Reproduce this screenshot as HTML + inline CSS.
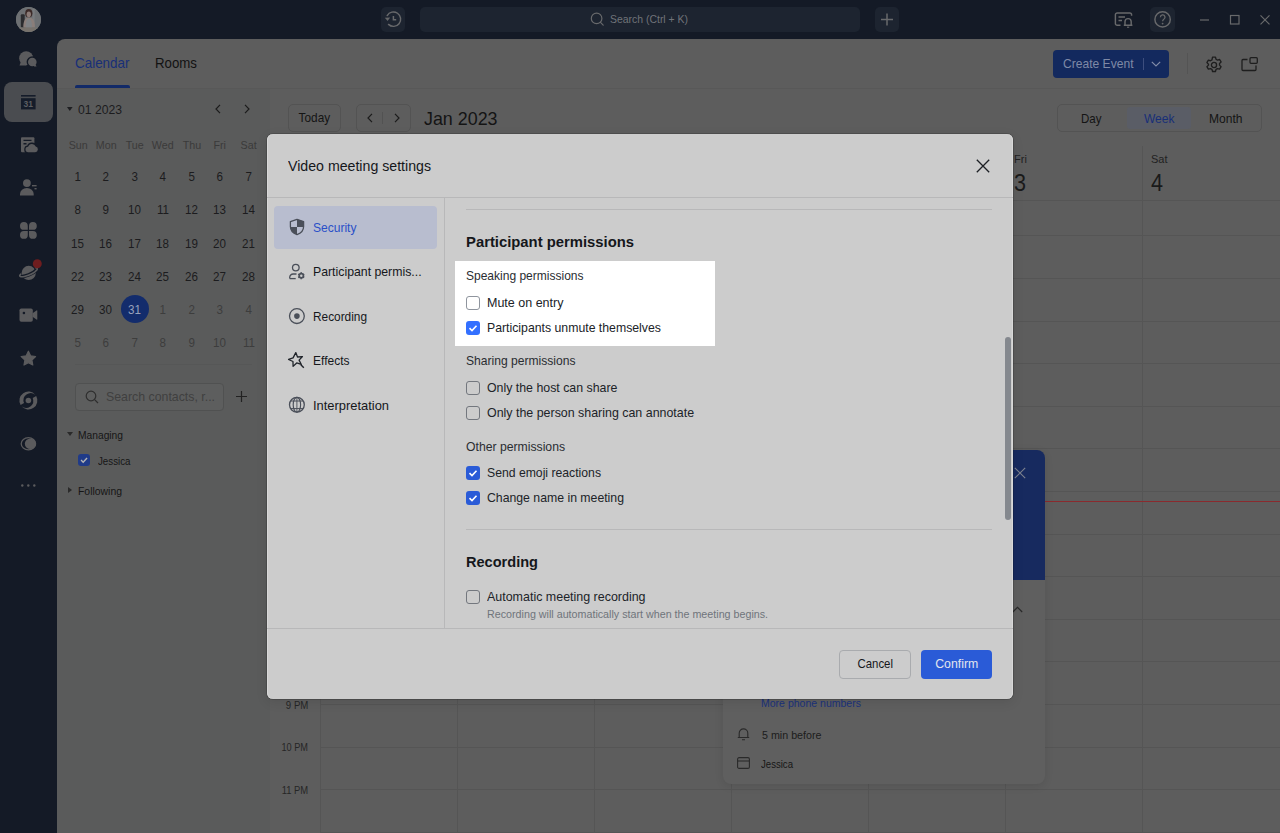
<!DOCTYPE html>
<html lang="en">
<head>
<meta charset="utf-8">
<title>Calendar - Video meeting settings</title>
<style>
*{box-sizing:border-box;margin:0;padding:0}
html,body{width:1280px;height:833px;overflow:hidden}
body{background:#141a26;font-family:"Liberation Sans",sans-serif;font-size:13px;color:#1a1a1a;position:relative}
.abs{position:absolute}
svg{display:block;overflow:visible}
.t{position:absolute;white-space:nowrap;line-height:1}
/* top bar */
#topbar{position:absolute;left:0;top:0;width:1280px;height:39px;background:#141a26}
#nav{position:absolute;left:0;top:39px;width:57px;height:794px;background:#141a26}
.tb-btn{position:absolute;background:#1d2430;border-radius:5px}
/* main */
#main{position:absolute;left:57px;top:39px;width:1223px;height:794px;background:#5d5d5d;border-top-left-radius:8px;overflow:hidden}
#side{position:absolute;left:0;top:50px;width:213px;height:744px;background:#5a5b5b}
#hdrline{position:absolute;left:0;top:49px;width:1223px;height:1px;background:#585858}

/* header tabs */
.tab{position:absolute;top:14px;font-size:14.5px;line-height:20px;white-space:nowrap}
/* mini calendar */
.wd{position:absolute;top:99px;width:28px;text-align:center;font-size:11.500px;line-height:14px;color:#3a3a3a}
.d{position:absolute;width:28px;height:28px;line-height:29px;text-align:center;font-size:13.500px;color:#1c1c1e;border-radius:50%}
.d i{font-style:normal;display:inline-block;transform:scaleX(.86)}
.wd i{font-style:normal;display:inline-block;transform:scaleX(.93)}
.d.o{color:#3d3d3d}
.d.sel{background:#132c6c;color:#98a1bb}
.grp{position:absolute;font-size:11.5px;line-height:14px;color:#161616;white-space:nowrap}
.cb{position:absolute;width:14px;height:14px;border-radius:3px}
.cb.on{background:#2856d6}
.cb.off{border:1px solid #6f737a;background:#ccc}
.cb svg{position:absolute;left:0;top:0}

/* toolbar */
.btn{position:absolute;border:1px solid #535353;border-radius:5px;font-size:13px;line-height:26px;text-align:center;color:#141414;white-space:nowrap}
.vline{position:absolute;width:1px;background:#555}
.hline{position:absolute;height:1px;background:#555}
.tm{position:absolute;width:40px;text-align:right;font-size:10px;line-height:12px;color:#262626;white-space:nowrap}
.dh{position:absolute;font-size:11px;line-height:14px;color:#222}
.dn{position:absolute;font-size:23.500px;line-height:26px;color:#1a1a1a;transform:scaleX(.92);transform-origin:0 50%}

/* popover */
#pop{position:absolute;left:723px;top:450px;width:322px;height:334px;border-radius:8px;background:#5f5f5f;box-shadow:0 2px 8px rgba(0,0,0,.10);overflow:hidden}
#pop .hd{position:absolute;left:0;top:0;width:322px;height:130px;background:#172a5f}
/* modal */
#modal{position:absolute;left:267px;top:134px;width:746px;height:565px;border-radius:6px;background:#ccc;box-shadow:inset 1px 0 0 #d8d8d8,inset -1px 0 0 #d8d8d8,0 3px 12px rgba(0,0,0,.10),0 0 0 1px rgba(0,0,0,.14);overflow:hidden;color:#171a1f}
#modal .ttl{position:absolute;left:21px;top:23px;font-size:15px;line-height:18px;color:#15171b;white-space:nowrap}
.mi{position:absolute;left:46px;font-size:13px;line-height:16px;color:#15171b;white-space:nowrap}
.h2{position:absolute;left:199px;font-size:15px;line-height:18px;font-weight:bold;color:#15171b;white-space:nowrap}
.h3{position:absolute;left:199px;font-size:13px;line-height:16px;color:#2a2d32;white-space:nowrap}
.lb{position:absolute;left:220px;font-size:13px;line-height:16px;color:#202328;white-space:nowrap}
.sub{position:absolute;left:220px;font-size:11px;line-height:14px;color:#6f747b;white-space:nowrap}
.mh{position:absolute;height:1px;background:#b8b8b9}
.mbtn{position:absolute;top:516px;height:28.500px;border-radius:4px;font-size:13px;line-height:26px;text-align:center}
.sx{display:inline-block;white-space:nowrap}
</style>
</head>
<body>
<div id="topbar">
  <div class="abs" id="avatar" style="left:16px;top:6.700px;width:25.400px;height:25.400px;border-radius:50%;background:#6c6f72;overflow:hidden">
    <svg width="25.400" height="25.400" viewBox="0 0 25.400 25.400"><rect width="25.400" height="25.400" fill="#6d7073"/><rect x="16.500" y="2" width="2.200" height="14" fill="#787b7e"/><rect x="4.800" y="7.200" width="3.900" height="13.200" rx="1" fill="#2b2c2f"/><ellipse cx="12.800" cy="6.300" rx="3.600" ry="4.300" fill="#3b2a28"/><ellipse cx="12.800" cy="7.300" rx="2.200" ry="2.900" fill="#8b7b77"/><path d="M7.300 20.500c0-6 1.500-10 5.500-10s6.200 3 6.200 10z" fill="#8a7e7a"/><path d="M9.800 20.500c0-5 .8-9 3-9s3.200 4 3.200 9z" fill="#7f8285"/><rect x="0" y="20.500" width="25.400" height="5" fill="#77726c"/></svg>
  </div>
  <div class="tb-btn" style="left:381px;top:7px;width:24px;height:25px"></div>
  <div class="tb-btn" style="left:420px;top:7px;width:440px;height:25px"></div>
  <div class="tb-btn" style="left:875px;top:7px;width:24px;height:25px"></div>
  <div class="tb-btn" style="left:1150px;top:7px;width:25px;height:25px"></div>
  <svg class="abs" style="left:0;top:0" width="1280" height="39" viewBox="0 0 1280 39" fill="none" stroke="#68696b" stroke-width="1.450">
    <!-- history -->
    <path d="M387.200 15.600a7.200 7.200 0 1 1 1.300 8.800" stroke-linecap="round"/><path d="M384.800 17.800l2.800 3.200 2.600-3.600z" fill="#666769" stroke="none"/><path d="M393.400 16v3.700h2.800" stroke-width="1.500"/>
    <!-- search -->
    <circle cx="596.600" cy="18.400" r="5.300" stroke-width="1.200"/><path d="M600.500 22.400l2.700 2.700" stroke-width="1.200" stroke-linecap="round"/>
    <!-- plus -->
    <path d="M887 13.500v12M881 19.500h12" stroke-width="1.500"/>
    <!-- notify card -->
    <path d="M1120.500 25.300h-3.300a1.800 1.800 0 0 1-1.800-1.800v-8.800a1.800 1.800 0 0 1 1.800-1.800h12.600a1.800 1.800 0 0 1 1.800 1.800v1"/><path d="M1118.500 17h6.500M1118.500 20.500h3.500"/><path d="M1123.800 25.200h8.600M1125 25v-3.300a3.100 3.100 0 0 1 6.200 0v3.300" fill="#141a26"/><path d="M1127 27.200h2.200" stroke-width="1.100"/>
    <!-- help -->
    <circle cx="1162.600" cy="19.400" r="7.700"/><path d="M1160.400 17.200a2.300 2.300 0 1 1 3.400 2c-.8 .5-1.200 1-1.200 2.100" stroke-width="1.300"/><circle cx="1162.600" cy="23.600" r=".9" fill="#666769" stroke="none"/>
    <!-- window controls -->
    <path d="M1200 20h9" stroke-width="1.200"/><rect x="1230.500" y="15.500" width="8.500" height="8.500" stroke-width="1.200"/><path d="M1260.500 15.300l9 9M1269.500 15.300l-9 9" stroke-width="1.200"/>
  </svg>
  <div class="t" style="left:610px;top:14px;font-size:11px;color:#707379"><span class="sx" style="transform:scaleX(0.949);transform-origin:0 50%">Search (Ctrl + K)</span></div>
</div>
<div id="nav">
  <div class="abs" style="left:4px;top:43px;width:49px;height:40px;border-radius:8px;background:#4a4c50"></div>
  <svg class="abs" style="left:0;top:0" width="57" height="520" viewBox="0 39 57 520">
    <!-- chat -->
    <g fill="#5b5b5d"><circle cx="26.200" cy="58.300" r="7"/><path d="M20.800 62l-1.300 3.600h7z"/><circle cx="32.300" cy="62" r="5.700" fill="#141a26"/><circle cx="32.300" cy="62" r="4.300"/><path d="M34 65v1.600h2.600l-1.400-2.600z"/></g>
    <!-- calendar -->
    <g fill="#151c2a"><rect x="21" y="95" width="14.600" height="1.600"/><rect x="21" y="98.200" width="14.600" height="11.200"/></g>
    <text x="28.300" y="106.800" font-family="Liberation Sans, sans-serif" font-size="8.500" font-weight="bold" fill="#5c5e62" text-anchor="middle">31</text>
    <!-- docs with cloud -->
    <g fill="#5b5b5d"><rect x="21" y="137.300" width="13.400" height="15" rx="1"/><path d="M23.500 140.400h8M23.500 143.700h3" stroke="#141a26" stroke-width="1.400"/>
      <path d="M28.300 152.200a2.700 2.700 0 0 1-.2-5.400 4 4 0 0 1 7.600-.3 2.900 2.900 0 0 1-.5 5.700z" stroke="#141a26" stroke-width="2.600"/>
      <path d="M28.300 152.200a2.700 2.700 0 0 1-.2-5.400 4 4 0 0 1 7.600-.3 2.900 2.900 0 0 1-.5 5.700z"/></g>
    <!-- contacts -->
    <g fill="#5b5b5d"><circle cx="26.900" cy="183.100" r="3.900"/><path d="M20 195.600v-1.600a6.800 6 0 0 1 13.700 0v1.600z"/><rect x="32" y="185" width="4.600" height="1.400"/><rect x="34.500" y="188" width="2.100" height="1.400"/></g>
    <!-- apps -->
    <g fill="#5b5b5d"><path d="M27.800 229.800h-3.900a3.900 3.900 0 1 1 3.900-3.900z"/><path d="M29 229.800h3.900a3.900 3.900 0 1 0-3.900-3.900z"/><path d="M27.800 231h-3.900a3.900 3.900 0 1 0 3.900 3.900z"/><path d="M29 231h3.900a3.900 3.900 0 1 1-3.900 3.900z"/></g>
    <!-- planet -->
    <g><circle cx="28.700" cy="272.900" r="7.100" fill="#5b5b5d"/><path d="M20.500 276.300c4 1 12.500-2.500 16-6.300" fill="none" stroke="#141a26" stroke-width="3.600"/><path d="M20.800 274.200c-2.500 2-.5 3.200 3.500 2.300 5-1.200 10.500-4 12.500-6.500 1.200-1.600.2-2.300-1.200-2.200" fill="none" stroke="#5b5b5d" stroke-width="1.600" stroke-linecap="round"/><circle cx="37.300" cy="263.700" r="4.500" fill="#6e1d1f"/></g>
    <!-- video -->
    <g fill="#5b5b5d"><rect x="19.500" y="308.400" width="13.300" height="13.300" rx="1.800"/><path d="M32.500 313.300l4-2.900a.5 .5 0 0 1 .8 .4v8.400a.5 .5 0 0 1-.8 .4l-4-2.900z"/><circle cx="23.900" cy="313" r="1.300" fill="#141a26"/></g>
    <!-- star -->
    <path fill="#5b5b5d" d="M28.400 351.200l2.200 4.600 5 .7-3.700 3.500 .9 5-4.400-2.400-4.400 2.400 .9-5-3.700-3.500 5-.7z" stroke="#5b5b5d" stroke-width="1.200" stroke-linejoin="round"/>
    <!-- swirl -->
    <g fill="#5b5b5d"><circle cx="28.400" cy="400.500" r="2.800"/><path d="M20.610 405A9 9 0 0 1 35.290 394.710A7.200 7.200 0 0 0 24.070 403Z"/><path d="M20.610 405A9 9 0 0 1 35.290 394.710A7.200 7.200 0 0 0 24.070 403Z" transform="rotate(180 28.400 400.500)"/></g>
    <!-- moon -->
    <g><ellipse cx="28.400" cy="443.700" rx="7.200" ry="6.100" fill="none" stroke="#5b5b5d" stroke-width="1.300"/><ellipse cx="30.400" cy="443.700" rx="5.600" ry="5.300" fill="#5b5b5d"/></g>
    <!-- dots -->
    <g fill="#5b5b5d"><circle cx="22.300" cy="485.500" r="1.200"/><circle cx="28.300" cy="485.500" r="1.200"/><circle cx="34.300" cy="485.500" r="1.200"/></g>
  </svg>
</div>
<div id="main">
  <div id="side"></div>
  <div id="hdrline"></div>

  <div class="tab" style="left:18px;color:#182f78"><span class="sx" style="transform:scaleX(0.926);transform-origin:0 50%">Calendar</span></div>
  <div class="abs" style="left:18px;top:46px;width:55px;height:3px;background:#122a68;border-radius:2px 2px 0 0"></div>
  <div class="tab" style="left:98px;color:#121212"><span class="sx" style="transform:scaleX(0.914);transform-origin:0 50%">Rooms</span></div>
  <svg class="abs" style="left:9.600px;top:68.200px" width="5.600" height="4" viewBox="0 0 7 5"><path d="M0 0h7L3.500 5z" fill="#1e1f22"/></svg>
  <div class="t" style="left:21px;top:63.500px;font-size:13px;color:#1c1c1e"><span class="sx" style="transform:scaleX(0.936);transform-origin:0 50%">01 2023</span></div>
  <svg class="abs" style="left:158px;top:65px" width="6" height="10" viewBox="0 0 6 10"><path d="M5 .8L1 5l4 4.200" fill="none" stroke="#1c1c1c" stroke-width="1.200"/></svg>
  <svg class="abs" style="left:187px;top:65px" width="6" height="10" viewBox="0 0 6 10"><path d="M1 .8L5 5 1 9.200" fill="none" stroke="#1c1c1c" stroke-width="1.200"/></svg>
  <div class="wd" style="left:7px"><i>Sun</i></div>
  <div class="wd" style="left:35px"><i>Mon</i></div>
  <div class="wd" style="left:64px"><i>Tue</i></div>
  <div class="wd" style="left:92px"><i>Wed</i></div>
  <div class="wd" style="left:121px"><i>Thu</i></div>
  <div class="wd" style="left:149px"><i>Fri</i></div>
  <div class="wd" style="left:178px"><i>Sat</i></div>
  <div class="d" style="left:7px;top:123px"><i>1</i></div>
  <div class="d" style="left:35px;top:123px"><i>2</i></div>
  <div class="d" style="left:64px;top:123px"><i>3</i></div>
  <div class="d" style="left:92px;top:123px"><i>4</i></div>
  <div class="d" style="left:121px;top:123px"><i>5</i></div>
  <div class="d" style="left:149px;top:123px"><i>6</i></div>
  <div class="d" style="left:178px;top:123px"><i>7</i></div>
  <div class="d" style="left:7px;top:156px"><i>8</i></div>
  <div class="d" style="left:35px;top:156px"><i>9</i></div>
  <div class="d" style="left:64px;top:156px"><i>10</i></div>
  <div class="d" style="left:92px;top:156px"><i>11</i></div>
  <div class="d" style="left:121px;top:156px"><i>12</i></div>
  <div class="d" style="left:149px;top:156px"><i>13</i></div>
  <div class="d" style="left:178px;top:156px"><i>14</i></div>
  <div class="d" style="left:7px;top:190px"><i>15</i></div>
  <div class="d" style="left:35px;top:190px"><i>16</i></div>
  <div class="d" style="left:64px;top:190px"><i>17</i></div>
  <div class="d" style="left:92px;top:190px"><i>18</i></div>
  <div class="d" style="left:121px;top:190px"><i>19</i></div>
  <div class="d" style="left:149px;top:190px"><i>20</i></div>
  <div class="d" style="left:178px;top:190px"><i>21</i></div>
  <div class="d" style="left:7px;top:223px"><i>22</i></div>
  <div class="d" style="left:35px;top:223px"><i>23</i></div>
  <div class="d" style="left:64px;top:223px"><i>24</i></div>
  <div class="d" style="left:92px;top:223px"><i>25</i></div>
  <div class="d" style="left:121px;top:223px"><i>26</i></div>
  <div class="d" style="left:149px;top:223px"><i>27</i></div>
  <div class="d" style="left:178px;top:223px"><i>28</i></div>
  <div class="d" style="left:7px;top:256px"><i>29</i></div>
  <div class="d" style="left:35px;top:256px"><i>30</i></div>
  <div class="d sel" style="left:64px;top:256px"><i>31</i></div>
  <div class="d o" style="left:92px;top:256px"><i>1</i></div>
  <div class="d o" style="left:121px;top:256px"><i>2</i></div>
  <div class="d o" style="left:149px;top:256px"><i>3</i></div>
  <div class="d o" style="left:178px;top:256px"><i>4</i></div>
  <div class="d o" style="left:7px;top:289px"><i>5</i></div>
  <div class="d o" style="left:35px;top:289px"><i>6</i></div>
  <div class="d o" style="left:64px;top:289px"><i>7</i></div>
  <div class="d o" style="left:92px;top:289px"><i>8</i></div>
  <div class="d o" style="left:121px;top:289px"><i>9</i></div>
  <div class="d o" style="left:149px;top:289px"><i>10</i></div>
  <div class="d o" style="left:178px;top:289px"><i>11</i></div>
  <div class="abs" style="left:18px;top:325px;width:177px;height:1px;background:#565757"></div>
  <div class="abs" style="left:18px;top:344px;width:149px;height:28px;border:1px solid #505151;border-radius:4px;background:#5d5e5e"></div>
  <svg class="abs" style="left:28px;top:351px" width="14" height="14" viewBox="0 0 14 14"><circle cx="6" cy="6" r="4.800" fill="none" stroke="#2e2e2e" stroke-width="1.200"/><path d="M9.600 9.600L13 13" stroke="#2e2e2e" stroke-width="1.200"/></svg>
  <div class="t" style="left:49px;top:351px;font-size:13px;color:#404040"><span class="sx" style="transform:scaleX(0.949);transform-origin:0 50%">Search contacts, r...</span></div>
  <svg class="abs" style="left:179px;top:352px" width="11" height="11" viewBox="0 0 11 11"><path d="M5.500 0v11M0 5.500h11" stroke="#222" stroke-width="1.200"/></svg>
  <svg class="abs" style="left:10px;top:393px" width="6" height="4" viewBox="0 0 6 4"><path d="M0 0h6L3 4z" fill="#2a2a2a"/></svg>
  <div class="grp" style="left:21px;top:388.500px"><span class="sx" style="transform:scaleX(0.891);transform-origin:0 50%">Managing</span></div>
  <div class="cb on" style="left:21.400px;top:415px;width:12px;height:12px;background:#203b88"><svg width="12" height="12" viewBox="0 0 13 13"><path d="M3.300 6.600l2.300 2.300 4.200-4.600" fill="none" stroke="#b5b5b5" stroke-width="1.500"/></svg></div>
  <div class="grp" style="left:41px;top:414.500px"><span class="sx" style="transform:scaleX(0.847);transform-origin:0 50%">Jessica</span></div>
  <svg class="abs" style="left:11px;top:448px" width="4" height="6" viewBox="0 0 4 6"><path d="M0 0v6L4 3z" fill="#2a2a2a"/></svg>
  <div class="grp" style="left:21px;top:444.500px"><span class="sx" style="transform:scaleX(0.906);transform-origin:0 50%">Following</span></div>
  <!--MAINGRID-->
  <div class="abs" style="left:995.5px;top:11px;width:116px;height:28px;background:#13295e;border-radius:4px"></div>
  <div class="t" style="left:1006px;top:18px;font-size:13px;color:#7f89a6"><span class="sx" style="transform:scaleX(0.929);transform-origin:0 50%">Create Event</span></div>
  <div class="abs" style="left:1086px;top:19px;width:1px;height:12px;background:#3d4e7e"></div>
  <svg class="abs" style="left:1094px;top:22px" width="10" height="6" viewBox="0 0 10 6"><path d="M.8 .8L5 5 9.200 .8" fill="none" stroke="#7f89a6" stroke-width="1.200"/></svg>
  <div class="abs" style="left:1130px;top:14px;width:1px;height:21px;background:#545454"></div>
  <svg class="abs" style="left:1148px;top:16.6px" width="18" height="18" viewBox="0 0 16 16"><path d="M6.700 1h2.600l.5 1.900 1.300.7 1.900-.5 1.300 2.200-1.400 1.400v1.400l1.400 1.400-1.300 2.200-1.900-.5-1.300.7-.5 1.900H6.700l-.5-1.900-1.300-.7-1.900.5-1.300-2.200 1.400-1.400V7.300L1.700 5.900 3 3.700l1.900.5 1.300-.7z" fill="none" stroke="#1e1e1e" stroke-width="1.200" stroke-linejoin="round"/><circle cx="8" cy="8" r="2.300" fill="none" stroke="#1e1e1e" stroke-width="1.200"/></svg>
  <svg class="abs" style="left:1184px;top:18px" width="17" height="14" viewBox="0 0 17 14"><path d="M6.500 2.500H2a1 1 0 0 0-1 1v9a1 1 0 0 0 1 1h12a1 1 0 0 0 1-1V8.500" fill="none" stroke="#1e1e1e" stroke-width="1.300"/><rect x="9" y=".7" width="7.300" height="5.600" rx="1" fill="none" stroke="#1e1e1e" stroke-width="1.300"/></svg>
  <div class="btn" style="left:231px;top:65px;width:53px;height:28px"><span class="sx" style="transform:scaleX(0.908);transform-origin:50% 50%">Today</span></div>
  <div class="btn" style="left:298.5px;top:65px;width:55px;height:28px"></div>
  <div class="abs" style="left:325px;top:73px;width:1px;height:12px;background:#525252"></div>
  <svg class="abs" style="left:310px;top:74px" width="6" height="10" viewBox="0 0 6 10"><path d="M5 .8L1 5l4 4.200" fill="none" stroke="#1c1c1c" stroke-width="1.200"/></svg>
  <svg class="abs" style="left:337px;top:74px" width="6" height="10" viewBox="0 0 6 10"><path d="M1 .8L5 5 1 9.200" fill="none" stroke="#1c1c1c" stroke-width="1.200"/></svg>
  <div class="t" style="left:367px;top:70.5px;font-size:18.5px;color:#141414"><span class="sx" style="transform:scaleX(0.966);transform-origin:0 50%">Jan 2023</span></div>
  <div class="btn" style="left:999.5px;top:65px;width:205.500px;height:28px"></div>
  <div class="abs" style="left:1070px;top:68px;width:64px;height:22px;background:#5a5d66;border-radius:3px"></div>
  <div class="t" style="left:1024px;top:72.500px;font-size:13px;color:#141414"><span class="sx" style="transform:scaleX(0.886);transform-origin:0 50%">Day</span></div>
  <div class="t" style="left:1087px;top:72.500px;font-size:13px;color:#182f78"><span class="sx" style="transform:scaleX(0.924);transform-origin:0 50%">Week</span></div>
  <div class="t" style="left:1152px;top:72.500px;font-size:13px;color:#141414"><span class="sx" style="transform:scaleX(0.927);transform-origin:0 50%">Month</span></div>
  <div class="vline" style="left:263px;top:107px;height:700px"></div>
  <div class="vline" style="left:400px;top:107px;height:700px"></div>
  <div class="vline" style="left:537px;top:107px;height:700px"></div>
  <div class="vline" style="left:674px;top:107px;height:700px"></div>
  <div class="vline" style="left:811px;top:107px;height:700px"></div>
  <div class="vline" style="left:948px;top:107px;height:700px"></div>
  <div class="vline" style="left:1085px;top:107px;height:700px"></div>
  <div class="hline" style="left:213px;top:161px;width:1010px"></div>
  <div class="hline" style="left:263px;top:196px;width:960px"></div>
  <div class="hline" style="left:263px;top:239px;width:960px"></div>
  <div class="hline" style="left:263px;top:282px;width:960px"></div>
  <div class="hline" style="left:263px;top:324px;width:960px"></div>
  <div class="hline" style="left:263px;top:367px;width:960px"></div>
  <div class="hline" style="left:263px;top:409px;width:960px"></div>
  <div class="hline" style="left:263px;top:452px;width:960px"></div>
  <div class="hline" style="left:263px;top:495px;width:960px"></div>
  <div class="hline" style="left:263px;top:537px;width:960px"></div>
  <div class="hline" style="left:263px;top:580px;width:960px"></div>
  <div class="hline" style="left:263px;top:622px;width:960px"></div>
  <div class="hline" style="left:263px;top:665px;width:960px"></div>
  <div class="hline" style="left:263px;top:708px;width:960px"></div>
  <div class="hline" style="left:263px;top:750px;width:960px"></div>
  <div class="hline" style="left:263px;top:793px;width:960px"></div>
  <div class="tm" style="left:211.300px;top:661.3px"><span class="sx" style="transform:scaleX(0.964);transform-origin:100% 50%">9 PM</span></div>
  <div class="tm" style="left:211.300px;top:703.3px"><span class="sx" style="transform:scaleX(0.917);transform-origin:100% 50%">10 PM</span></div>
  <div class="tm" style="left:211.300px;top:746.3px"><span class="sx" style="transform:scaleX(0.941);transform-origin:100% 50%">11 PM</span></div>
  <div class="dh" style="left:957px;top:113px">Fri</div>
  <div class="dn" style="left:957px;top:131px">3</div>
  <div class="dh" style="left:1094px;top:113px">Sat</div>
  <div class="dn" style="left:1094px;top:131px">4</div>
  <div class="abs" style="left:811px;top:462px;width:412px;height:1px;background:#8a2a2e"></div>
</div>

<div id="pop">
  <div class="hd"></div>
  <svg class="abs" style="left:291px;top:16.700px" width="12" height="12" viewBox="0 0 12 12"><path d="M.8 .8l10.400 10.400M11.200 .8L.8 11.200" stroke="#7d828f" stroke-width="1.100"/></svg>
  <svg class="abs" style="left:288.500px;top:156.300px" width="11" height="7" viewBox="0 0 11 7"><path d="M.8 6L5.500 1.300 10.200 6" fill="none" stroke="#2a2a2a" stroke-width="1.200"/></svg>
  <div class="t" style="left:38px;top:248px;font-size:11px;color:#1b327c"><span class="sx" style="transform:scaleX(0.956);transform-origin:0 50%">More phone numbers</span></div>
  <svg class="abs" style="left:14px;top:277px" width="13" height="14" viewBox="0 0 13 14"><path d="M2.200 10.500V6.200a4.300 4.300 0 0 1 8.600 0v4.300M.8 10.500h11.400M5 12.800h3" fill="none" stroke="#2a2a2a" stroke-width="1.100"/></svg>
  <div class="t" style="left:39px;top:280px;font-size:11px;color:#1c1c1c"><span class="sx" style="transform:scaleX(0.973);transform-origin:0 50%">5 min before</span></div>
  <svg class="abs" style="left:14px;top:307px" width="13" height="12" viewBox="0 0 13 12"><rect x=".6" y=".6" width="11.800" height="10.800" rx="1.500" fill="none" stroke="#2a2a2a" stroke-width="1.100"/><path d="M.6 4h11.800" stroke="#2a2a2a" stroke-width="1.100"/></svg>
  <div class="t" style="left:38px;top:309px;font-size:10.5px;color:#161616"><span class="sx" style="transform:scaleX(0.914);transform-origin:0 50%">Jessica</span></div>
</div>
<div id="modal">
  <div class="ttl"><span class="sx" style="transform:scaleX(0.944);transform-origin:0 50%">Video meeting settings</span></div>
  <svg class="abs" style="left:709px;top:25px" width="14" height="14" viewBox="0 0 14 14"><path d="M.8 .8l12.400 12.400M13.200 .8L.8 13.200" stroke="#1c1f24" stroke-width="1.300"/></svg>
  <div class="mh" style="left:0;top:63px;width:746px"></div>
  <div class="abs" style="left:176.500px;top:64px;width:1px;height:430px;background:#b8b8b9"></div>
  <div class="mh" style="left:0;top:494px;width:746px"></div>
  <div class="abs" style="left:7px;top:72px;width:162.500px;height:42.600px;border-radius:4px;background:#b8bdcf"></div>
  <svg class="abs" style="left:0;top:0" width="60" height="300" viewBox="267 134 60 300" fill="none" stroke="#4a4f59" stroke-width="1.300">
    <!-- shield -->
    <path d="M297 219.300l6.600 2.300v4.800c0 4-2.700 6.800-6.600 8.200-3.900-1.400-6.600-4.200-6.600-8.200v-4.800z" stroke-linejoin="round"/>
    <path d="M297 219.300l6.600 2.300v5.300H297z" fill="#4a4f59" stroke="none"/><path d="M297 226.900v7.700c-3.600-1.300-6.200-3.800-6.600-7.700z" fill="#4a4f59" stroke="none"/>
    <!-- person gear -->
    <circle cx="295.800" cy="267.600" r="3.300"/><path d="M289.700 278.600v-1.200a3.400 3.400 0 0 1 3.400-3.400h3.400"/><path d="M289.700 278.600h6" />
    <circle cx="301.300" cy="275.800" r="2.100" stroke-width="1.700"/><path d="M301.200 272.300v1M301.200 278.300v1M298.200 274.100l.9 .5M303.300 277l.9 .5M298.200 277.500l.9-.5M303.300 274.600l.9-.5" stroke-width="1.600"/>
    <!-- recording -->
    <circle cx="296.900" cy="316.100" r="7.400"/><circle cx="296.900" cy="316.100" r="2.800" fill="#4a4f59" stroke="none"/>
    <!-- effects -->
    <path transform="translate(295.800 359.600) scale(1.130) translate(-295.800 -359.600)" d="M295.800 353.400l1.500 3.900 4.400-.4-3 3.200 2 3.800-4.100-1.300-3.200 3-.1-4.300-3.900-1.800 4-1.400z" stroke="#1f2329" stroke-width="1.150" stroke-linejoin="round"/><path d="M300.800 364.800l3 3" stroke="#1f2329" stroke-width="1.400"/>
    <!-- globe -->
    <circle cx="296.900" cy="404.800" r="7.400"/><ellipse cx="296.900" cy="404.800" rx="3.700" ry="7.400" stroke-width="1.150"/><path d="M296.900 397.400v14.800" stroke-width=".9"/><path d="M290.600 401h12.600M290.600 408.600h12.600" stroke-width="1"/>
  </svg>
  <div class="mi" style="top:86px;color:#2a50c8"><span class="sx" style="transform:scaleX(0.926);transform-origin:0 50%">Security</span></div>
  <div class="mi" style="top:130px;color:#15171b"><span class="sx" style="transform:scaleX(0.945);transform-origin:0 50%">Participant permis...</span></div>
  <div class="mi" style="top:175px;color:#15171b"><span class="sx" style="transform:scaleX(0.911);transform-origin:0 50%">Recording</span></div>
  <div class="mi" style="top:219px;color:#15171b"><span class="sx" style="transform:scaleX(0.924);transform-origin:0 50%">Effects</span></div>
  <div class="mi" style="top:264px;color:#15171b"><span class="sx" style="transform:scaleX(0.992);transform-origin:0 50%">Interpretation</span></div>
  <div class="mh" style="left:199px;top:75px;width:526px"></div>
  <div class="h2" style="top:99px"><span class="sx" style="transform:scaleX(0.988);transform-origin:0 50%">Participant permissions</span></div>
  <div class="abs" style="left:188px;top:127px;width:260px;height:84.500px;background:#fff"></div>
  <div class="h3" style="top:134px"><span class="sx" style="transform:scaleX(0.924);transform-origin:0 50%">Speaking permissions</span></div>
  <div class="cb off" style="left:199px;top:161.500px;background:#fff;border-color:#8f959e"></div>
  <div class="lb" style="top:161px"><span class="sx" style="transform:scaleX(0.962);transform-origin:0 50%">Mute on entry</span></div>
  <div class="cb on" style="left:199px;top:187px;background:#3370ff"><svg width="14" height="14" viewBox="0 0 14 14"><path d="M3.500 7.200l2.500 2.400 4.500-4.900" fill="none" stroke="#fff" stroke-width="1.600"/></svg></div>
  <div class="lb" style="top:186px"><span class="sx" style="transform:scaleX(0.944);transform-origin:0 50%">Participants unmute themselves</span></div>
  <div class="h3" style="top:219px"><span class="sx" style="transform:scaleX(0.93);transform-origin:0 50%">Sharing permissions</span></div>
  <div class="cb off" style="left:199px;top:247px;background:#ccc;border-color:#73777e"></div>
  <div class="lb" style="top:246px"><span class="sx" style="transform:scaleX(0.95);transform-origin:0 50%">Only the host can share</span></div>
  <div class="cb off" style="left:199px;top:272px;background:#ccc;border-color:#73777e"></div>
  <div class="lb" style="top:271px"><span class="sx" style="transform:scaleX(0.955);transform-origin:0 50%">Only the person sharing can annotate</span></div>
  <div class="h3" style="top:305px"><span class="sx" style="transform:scaleX(0.939);transform-origin:0 50%">Other permissions</span></div>
  <div class="cb on" style="left:199px;top:332px;background:#2a5bd7"><svg width="14" height="14" viewBox="0 0 14 14"><path d="M3.500 7.200l2.500 2.400 4.500-4.900" fill="none" stroke="#fff" stroke-width="1.600"/></svg></div>
  <div class="lb" style="top:331px"><span class="sx" style="transform:scaleX(0.939);transform-origin:0 50%">Send emoji reactions</span></div>
  <div class="cb on" style="left:199px;top:357px;background:#2a5bd7"><svg width="14" height="14" viewBox="0 0 14 14"><path d="M3.500 7.200l2.500 2.400 4.500-4.900" fill="none" stroke="#fff" stroke-width="1.600"/></svg></div>
  <div class="lb" style="top:356px"><span class="sx" style="transform:scaleX(0.943);transform-origin:0 50%">Change name in meeting</span></div>
  <div class="mh" style="left:199px;top:395px;width:526px"></div>
  <div class="h2" style="top:419px"><span class="sx" style="transform:scaleX(0.971);transform-origin:0 50%">Recording</span></div>
  <div class="cb off" style="left:199px;top:456px;background:#ccc;border-color:#73777e"></div>
  <div class="lb" style="top:455px"><span class="sx" style="transform:scaleX(0.958);transform-origin:0 50%">Automatic meeting recording</span></div>
  <div class="sub" style="top:473px"><span class="sx" style="transform:scaleX(0.974);transform-origin:0 50%">Recording will automatically start when the meeting begins.</span></div>
  <div class="abs" style="left:738.300px;top:203px;width:6.200px;height:183px;border-radius:3px;background:#84888e"></div>
  <div class="mbtn" style="left:572px;width:71.500px;border:1px solid #a9abae;color:#15171b"><span class="sx" style="transform:scaleX(0.877);transform-origin:50% 50%">Cancel</span></div>
  <div class="mbtn" style="left:654px;width:71px;background:#2a5bd7;color:#e3e6ee;line-height:28px"><span class="sx" style="transform:scaleX(0.945);transform-origin:50% 50%">Confirm</span></div>
</div>
</body>
</html>
